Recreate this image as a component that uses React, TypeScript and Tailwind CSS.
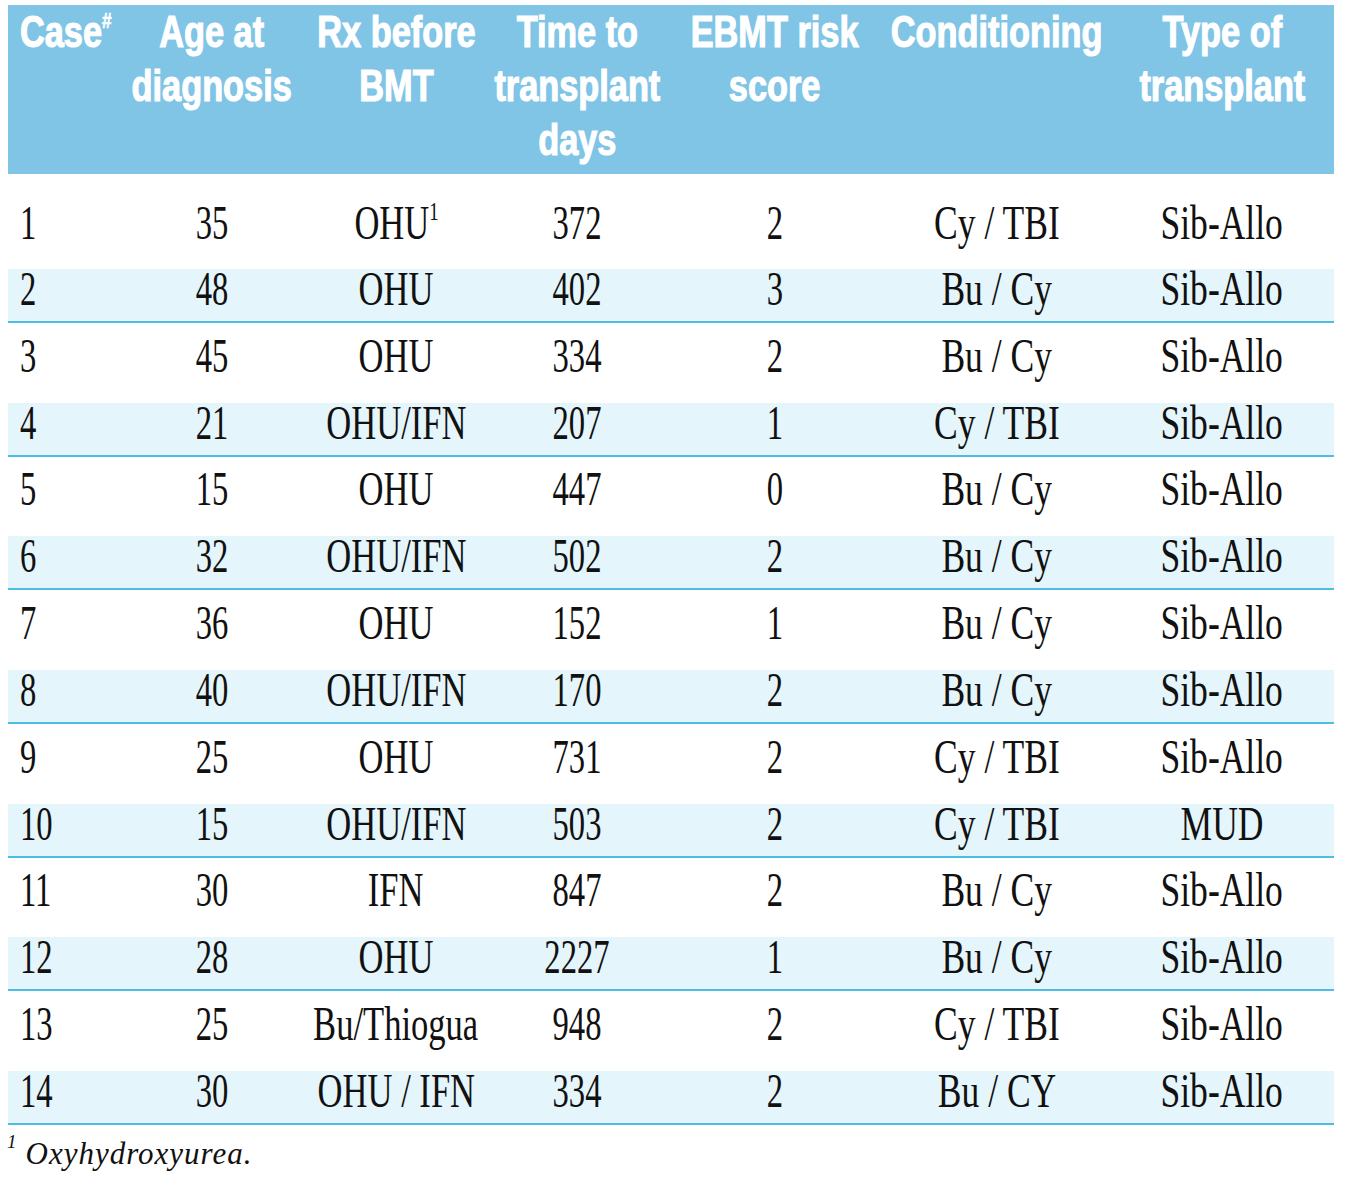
import React from 'react';

type Row = {
  caseNo: string;
  age: string;
  rx: string;
  days: string;
  risk: string;
  cond: string;
  type: string;
  note?: boolean;
};

const rows: Row[] = [
  { caseNo: '1', age: '35', rx: 'OHU', days: '372', risk: '2', cond: 'Cy / TBI', type: 'Sib-Allo', note: true },
  { caseNo: '2', age: '48', rx: 'OHU', days: '402', risk: '3', cond: 'Bu / Cy', type: 'Sib-Allo' },
  { caseNo: '3', age: '45', rx: 'OHU', days: '334', risk: '2', cond: 'Bu / Cy', type: 'Sib-Allo' },
  { caseNo: '4', age: '21', rx: 'OHU/IFN', days: '207', risk: '1', cond: 'Cy / TBI', type: 'Sib-Allo' },
  { caseNo: '5', age: '15', rx: 'OHU', days: '447', risk: '0', cond: 'Bu / Cy', type: 'Sib-Allo' },
  { caseNo: '6', age: '32', rx: 'OHU/IFN', days: '502', risk: '2', cond: 'Bu / Cy', type: 'Sib-Allo' },
  { caseNo: '7', age: '36', rx: 'OHU', days: '152', risk: '1', cond: 'Bu / Cy', type: 'Sib-Allo' },
  { caseNo: '8', age: '40', rx: 'OHU/IFN', days: '170', risk: '2', cond: 'Bu / Cy', type: 'Sib-Allo' },
  { caseNo: '9', age: '25', rx: 'OHU', days: '731', risk: '2', cond: 'Cy / TBI', type: 'Sib-Allo' },
  { caseNo: '10', age: '15', rx: 'OHU/IFN', days: '503', risk: '2', cond: 'Cy / TBI', type: 'MUD' },
  { caseNo: '11', age: '30', rx: 'IFN', days: '847', risk: '2', cond: 'Bu / Cy', type: 'Sib-Allo' },
  { caseNo: '12', age: '28', rx: 'OHU', days: '2227', risk: '1', cond: 'Bu / Cy', type: 'Sib-Allo' },
  { caseNo: '13', age: '25', rx: 'Bu/Thiogua', days: '948', risk: '2', cond: 'Cy / TBI', type: 'Sib-Allo' },
  { caseNo: '14', age: '30', rx: 'OHU / IFN', days: '334', risk: '2', cond: 'Bu / CY', type: 'Sib-Allo' },
];

const grid = 'grid grid-cols-[112px_184px_184px_178px_218px_226px_224px]';

// centred cell: the child keeps its own width so it overflows evenly, then gets squeezed
function Cell({ children, squeeze }: { children: React.ReactNode; squeeze: string }) {
  return (
    <div className="flex justify-center">
      <div className={`shrink-0 whitespace-nowrap text-center ${squeeze}`}>{children}</div>
    </div>
  );
}

export default function App() {
  return (
    <div className="min-h-[1186px] bg-white pt-[5px] pl-[8px]">
      <div className="w-[1326px]">
        {/* Header */}
        <div
          className={`${grid} h-[169px] items-start bg-[#80c4e6] text-[44px] leading-[54px] font-bold text-white [-webkit-text-stroke:1.2px_#fff]`}
          style={{ fontFamily: '"Liberation Sans", Arial, sans-serif' }}
        >
          <div className="flex justify-start pl-[12px]">
            <div className="shrink-0 whitespace-nowrap origin-left scale-x-78">
              Case<sup className="text-[22px] -top-[19px] [-webkit-text-stroke:0.6px_#fff]">#</sup>
            </div>
          </div>
          <Cell squeeze="scale-x-78">
            Age at<br />diagnosis
          </Cell>
          <Cell squeeze="scale-x-78">
            Rx before<br />BMT
          </Cell>
          <Cell squeeze="scale-x-78">
            Time to<br />transplant<br />days
          </Cell>
          <Cell squeeze="scale-x-78">
            EBMT risk<br />score
          </Cell>
          <Cell squeeze="scale-x-78">Conditioning</Cell>
          <Cell squeeze="scale-x-78">
            Type of<br />transplant
          </Cell>
        </div>

        {/* Body */}
        <div
          className="text-[48px] leading-[40px] text-[#111]"
          style={{ fontFamily: '"Liberation Serif", "Times New Roman", serif' }}
        >
          {rows.map((r, i) => {
            const shaded = i % 2 === 1;
            const rowCls =
              i === 0
                ? 'h-[95px] pt-[29px]'
                : shaded
                  ? 'h-[54px] bg-[#e5f5fc] border-b-2 border-[#4dbde6]'
                  : 'h-[79.67px] pt-[12.67px]';
            return (
              <div key={r.caseNo} className={`${grid} items-start ${rowCls}`}>
                <div className="flex justify-start pl-[12px]">
                  <div className="shrink-0 whitespace-nowrap origin-left scale-x-68">{r.caseNo}</div>
                </div>
                <Cell squeeze="scale-x-68">{r.age}</Cell>
                <Cell squeeze="scale-x-72">
                  {r.rx}
                  {r.note && <sup className="text-[26px] -top-[19px]">1</sup>}
                </Cell>
                <Cell squeeze="scale-x-68">{r.days}</Cell>
                <Cell squeeze="scale-x-68">{r.risk}</Cell>
                <Cell squeeze="scale-x-74">{r.cond}</Cell>
                <Cell squeeze="scale-x-74">{r.type}</Cell>
              </div>
            );
          })}
        </div>

        {/* Footnote */}
        <p
          className="mt-[13px] -ml-[1px] text-[31px] leading-none italic tracking-[1px] text-[#111]"
          style={{ fontFamily: '"Liberation Serif", "Times New Roman", serif' }}
        >
          <sup className="mr-[8px] text-[19px] -top-[16px]">1</sup>Oxyhydroxyurea.
        </p>
      </div>
    </div>
  );
}
